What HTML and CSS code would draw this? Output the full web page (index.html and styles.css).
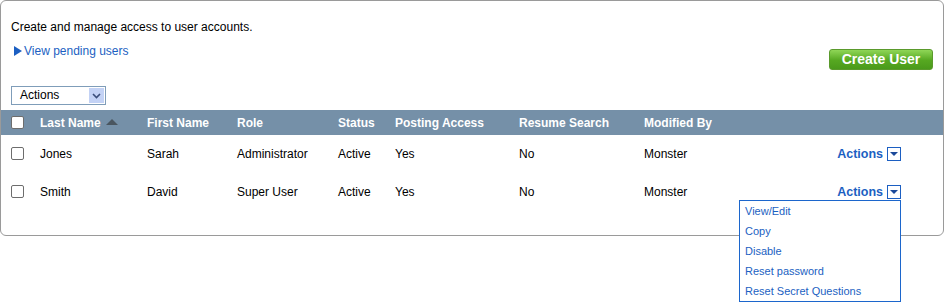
FILE: index.html
```html
<!DOCTYPE html>
<html>
<head>
    <meta charset="utf-8">
    <title>Users</title>
    <link rel="stylesheet" href="styles.css">
</head>
<body>
    <div class="panel">
        <div class="head">
            <div class="head_left">
                <p class="intro">Create and manage access to user accounts.</p>
                <a class="pending" href="#"><span class="tri"></span>View pending users</a>
                <div class="bulk">
                    <span class="bulk_label">Actions</span>
                    <span class="bulk_btn">
                        <svg width="9" height="6" viewBox="0 0 9 6"><path d="M1 1 L4.5 4.5 L8 1" fill="none" stroke="#3a4d7a" stroke-width="1.6"/></svg>
                    </span>
                </div>
            </div>
            <div class="head_right">
                <a class="btn_create" href="#">Create User</a>
            </div>
        </div>
        <table class="grid">
            <thead>
                <tr>
                    <th class="c_cb"><span class="cb"></span></th>
                    <th class="c_last">Last Name <span class="sort"></span></th>
                    <th class="c_first">First Name</th>
                    <th class="c_role">Role</th>
                    <th class="c_status">Status</th>
                    <th class="c_post">Posting Access</th>
                    <th class="c_resume">Resume Search</th>
                    <th class="c_mod">Modified By</th>
                    <th class="c_act"></th>
                </tr>
            </thead>
            <tbody>
                <tr>
                    <td class="c_cb"><span class="cb"></span></td>
                    <td>Jones</td>
                    <td>Sarah</td>
                    <td>Administrator</td>
                    <td>Active</td>
                    <td>Yes</td>
                    <td>No</td>
                    <td>Monster</td>
                    <td class="c_act"><a class="act" href="#">Actions</a><span class="act_btn"></span></td>
                </tr>
                <tr>
                    <td class="c_cb"><span class="cb"></span></td>
                    <td>Smith</td>
                    <td>David</td>
                    <td>Super User</td>
                    <td>Active</td>
                    <td>Yes</td>
                    <td>No</td>
                    <td>Monster</td>
                    <td class="c_act">
                        <div class="act_wrap">
                            <a class="act" href="#">Actions</a><span class="act_btn"></span>
                            <ul class="menu">
                                <li><a href="#">View/Edit</a></li>
                                <li><a href="#">Copy</a></li>
                                <li><a href="#">Disable</a></li>
                                <li><a href="#">Reset password</a></li>
                                <li><a href="#">Reset Secret Questions</a></li>
                            </ul>
                        </div>
                    </td>
                </tr>
            </tbody>
        </table>
    </div>
</body>
</html>
```

FILE: styles.css
```css
html, body {
    min-height: 302px;
}

body {
    margin: 0;
    font-family: "Liberation Sans", Arial, sans-serif;
    font-size: 12px;
    color: #000;
    background: #fff;
}

a {
    text-decoration: none;
    color: #1c5fc2;
}

.panel {
    width: 942px;
    height: 234px;
    border: 1px solid #9a9a9a;
    border-radius: 6px;
}

.head {
    display: flex;
    justify-content: space-between;
    padding: 19px 10px 0 10px;
}

.intro {
    margin: 0;
    line-height: 14px;
}

.pending {
    display: flex;
    align-items: center;
    margin-top: 10px;
    line-height: 14px;
}

.pending .tri {
    width: 0;
    height: 0;
    margin: 0 2px 0 3px;
    border-top: 5px solid transparent;
    border-bottom: 5px solid transparent;
    border-left: 8px solid #1c5fc2;
}

.bulk {
    display: flex;
    align-items: center;
    width: 93px;
    height: 17px;
    margin-top: 28px;
    border: 1px solid #7f9db9;
}

.bulk_label {
    flex: 1;
    padding-left: 8px;
    line-height: 17px;
}

.bulk_btn {
    display: flex;
    align-items: center;
    justify-content: center;
    width: 15px;
    height: 15px;
    margin-right: 1px;
    background: #c3d2f5;
}

.head_right {
    padding-top: 29px;
}

.btn_create {
    display: block;
    width: 104px;
    height: 21px;
    line-height: 19px;
    text-align: center;
    color: #fff;
    font-size: 14px;
    font-weight: bold;
    border-radius: 3px;
    border: 1px solid #5a9a2c;
    box-sizing: border-box;
    background: linear-gradient(#8fd657, #56a821 55%, #4a9a1b);
}

.grid {
    width: 100%;
    margin-top: 5px;
    border-collapse: collapse;
}

.grid th {
    height: 25px;
    padding: 0;
    text-align: left;
    color: #fff;
    font-weight: bold;
    background: #7590a8;
}

.grid td {
    height: 37px;
    padding: 0;
}

.grid tbody tr:last-child td {
    padding-top: 1px;
}

.cb {
    display: block;
    width: 11px;
    height: 11px;
    margin-left: 10px;
    border: 1px solid #6d6d6d;
    border-radius: 2px;
    background: #fff;
}

.c_cb { width: 39px; }
.c_last { width: 107px; }
.c_first { width: 90px; }
.c_role { width: 101px; }
.c_status { width: 57px; }
.c_post { width: 124px; }
.c_resume { width: 125px; }
.c_mod { width: 110px; }

.grid .c_act {
    text-align: right;
    padding-right: 42px;
}

.sort {
    display: inline-block;
    width: 0;
    height: 0;
    margin-left: 2px;
    border-left: 6px solid transparent;
    border-right: 6px solid transparent;
    border-bottom: 6px solid #4a5660;
    vertical-align: 2px;
}

.act_wrap {
    position: relative;
    display: inline-block;
}

.act {
    font-weight: bold;
    font-size: 12.5px;
}

.act_btn {
    display: inline-block;
    position: relative;
    width: 12px;
    height: 12px;
    margin-left: 4px;
    border: 1px solid #1c5fc2;
    vertical-align: -3px;
    background: #fff;
}

.act_btn::after {
    content: "";
    position: absolute;
    left: 2px;
    top: 4px;
    border-left: 4px solid transparent;
    border-right: 4px solid transparent;
    border-top: 4px solid #1c4a9a;
}

.menu {
    position: absolute;
    right: 0;
    top: 15px;
    z-index: 2;
    width: 160px;
    margin: 0;
    padding: 0;
    list-style: none;
    text-align: left;
    border: 1px solid #1c66cc;
    background: #fff;
}

.menu li {
    line-height: 20px;
    padding-left: 5px;
    font-size: 11px;
}
```
